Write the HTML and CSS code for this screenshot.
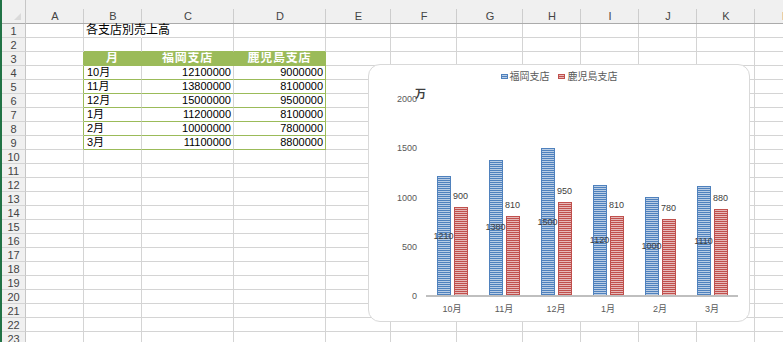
FILE: index.html
```html
<!DOCTYPE html>
<html lang="ja">
<head>
    <meta charset="UTF-8">
    <title>各支店別売上高</title>
    <link rel="stylesheet" href="styles.css">
</head>
<body>
    <div class="sheet">
        <!-- column headers -->
        <div class="corner"></div><div class="ch">A</div><div class="ch">B</div><div class="ch">C</div><div class="ch">D</div><div class="ch">E</div><div class="ch">F</div><div class="ch">G</div><div class="ch">H</div><div class="ch">I</div><div class="ch">J</div><div class="ch">K</div><div class="ch">L</div>

        <div class="rh">1</div><div></div><div class="title">各支店別売上高</div><div></div><div></div><div></div><div></div><div></div><div></div><div></div><div></div><div></div><div></div>
        <div class="rh">2</div><div></div><div class="top"></div><div class="top"></div><div class="top"></div><div></div><div></div><div></div><div></div><div></div><div></div><div></div><div></div>

        <!-- 売上表 -->
        <div class="rh">3</div><div class="edge"></div><div class="th">月</div><div class="th">福岡支店</div><div class="th">鹿児島支店</div><div></div><div></div><div></div><div></div><div></div><div></div><div></div><div></div>
        <div class="rh">4</div><div class="edge"></div><div class="td">10月</div><div class="td num">12100000</div><div class="td num last">9000000</div><div></div><div></div><div></div><div></div><div></div><div></div><div></div><div></div>
        <div class="rh">5</div><div class="edge"></div><div class="td">11月</div><div class="td num">13800000</div><div class="td num last">8100000</div><div></div><div></div><div></div><div></div><div></div><div></div><div></div><div></div>
        <div class="rh">6</div><div class="edge"></div><div class="td">12月</div><div class="td num">15000000</div><div class="td num last">9500000</div><div></div><div></div><div></div><div></div><div></div><div></div><div></div><div></div>
        <div class="rh">7</div><div class="edge"></div><div class="td">1月</div><div class="td num">11200000</div><div class="td num last">8100000</div><div></div><div></div><div></div><div></div><div></div><div></div><div></div><div></div>
        <div class="rh">8</div><div class="edge"></div><div class="td">2月</div><div class="td num">10000000</div><div class="td num last">7800000</div><div></div><div></div><div></div><div></div><div></div><div></div><div></div><div></div>
        <div class="rh">9</div><div class="edge"></div><div class="td">3月</div><div class="td num">11100000</div><div class="td num last">8800000</div><div></div><div></div><div></div><div></div><div></div><div></div><div></div><div></div>

        <div class="rh">10</div><div></div><div></div><div></div><div></div><div></div><div></div><div></div><div></div><div></div><div></div><div></div><div></div>
        <div class="rh">11</div><div></div><div></div><div></div><div></div><div></div><div></div><div></div><div></div><div></div><div></div><div></div><div></div>
        <div class="rh">12</div><div></div><div></div><div></div><div></div><div></div><div></div><div></div><div></div><div></div><div></div><div></div><div></div>
        <div class="rh">13</div><div></div><div></div><div></div><div></div><div></div><div></div><div></div><div></div><div></div><div></div><div></div><div></div>
        <div class="rh">14</div><div></div><div></div><div></div><div></div><div></div><div></div><div></div><div></div><div></div><div></div><div></div><div></div>
        <div class="rh">15</div><div></div><div></div><div></div><div></div><div></div><div></div><div></div><div></div><div></div><div></div><div></div><div></div>
        <div class="rh">16</div><div></div><div></div><div></div><div></div><div></div><div></div><div></div><div></div><div></div><div></div><div></div><div></div>
        <div class="rh">17</div><div></div><div></div><div></div><div></div><div></div><div></div><div></div><div></div><div></div><div></div><div></div><div></div>
        <div class="rh">18</div><div></div><div></div><div></div><div></div><div></div><div></div><div></div><div></div><div></div><div></div><div></div><div></div>
        <div class="rh">19</div><div></div><div></div><div></div><div></div><div></div><div></div><div></div><div></div><div></div><div></div><div></div><div></div>
        <div class="rh">20</div><div></div><div></div><div></div><div></div><div></div><div></div><div></div><div></div><div></div><div></div><div></div><div></div>
        <div class="rh">21</div><div></div><div></div><div></div><div></div><div></div><div></div><div></div><div></div><div></div><div></div><div></div><div></div>
        <div class="rh">22</div><div></div><div></div><div></div><div></div><div></div><div></div><div></div><div></div><div></div><div></div><div></div><div></div>
        <div class="rh">23</div><div></div><div></div><div></div><div></div><div></div><div></div><div></div><div></div><div></div><div></div><div></div><div></div>
    </div>

    <!-- グラフ (シートの上に浮いている) -->
    <div class="chart">
        <div class="legend">
            <span class="key blue"></span>福岡支店
            <span class="key red"></span>鹿児島支店
        </div>
        <div class="unit">万</div>
        <div class="chart-body">
            <div class="yaxis">
                <span>2000</span><span>1500</span><span>1000</span><span>500</span><span>0</span>
            </div>
            <div class="plot">
                <div class="bars">
                    <div class="group">
                        <div class="bar blue" style="height:118.6px"><span>1210</span></div>
                        <div class="col"><span class="val">900</span><div class="bar red" style="height:88.2px"></div></div>
                    </div>
                    <div class="group">
                        <div class="bar blue" style="height:135.2px"><span>1380</span></div>
                        <div class="col"><span class="val">810</span><div class="bar red" style="height:79.4px"></div></div>
                    </div>
                    <div class="group">
                        <div class="bar blue" style="height:147px"><span>1500</span></div>
                        <div class="col"><span class="val">950</span><div class="bar red" style="height:93.1px"></div></div>
                    </div>
                    <div class="group">
                        <div class="bar blue" style="height:109.8px"><span>1120</span></div>
                        <div class="col"><span class="val">810</span><div class="bar red" style="height:79.4px"></div></div>
                    </div>
                    <div class="group">
                        <div class="bar blue" style="height:98px"><span>1000</span></div>
                        <div class="col"><span class="val">780</span><div class="bar red" style="height:76.4px"></div></div>
                    </div>
                    <div class="group">
                        <div class="bar blue" style="height:108.8px"><span>1110</span></div>
                        <div class="col"><span class="val">880</span><div class="bar red" style="height:86.2px"></div></div>
                    </div>
                </div>
                <div class="xlabels">
                    <span>10月</span><span>11月</span><span>12月</span><span>1月</span><span>2月</span><span>3月</span>
                </div>
            </div>
        </div>
    </div>
</body>
</html>
```

FILE: styles.css
```css
body {
    margin: 0;
    height: 342px;
    overflow: hidden;
    position: relative;
    background: #fff;
    font-family: "Liberation Sans", "Noto Sans CJK JP", sans-serif;
    color: #000;
}

/* ---- sheet ---- */
.sheet {
    display: grid;
    grid-template-columns: 24px 58px 58px 92px 92px 65px 66px 66px 58px 58px 58px 58px 60px;
    grid-template-rows: 24px;
    grid-auto-rows: 14px;
    border-left: 2px solid #217346;
}

.sheet > div {
    box-sizing: border-box;
    border-right: 1px solid #d4d4d4;
    border-bottom: 1px solid #d4d4d4;
    padding: 0 2px 0 3px;
    font-size: 11px;
    line-height: 13px;
    white-space: nowrap;
    overflow: hidden;
}

.sheet > .corner {
    position: relative;
    background: #f0f0f0;
    border-right: 1px solid #c6c6c6;
    border-bottom: 1px solid #ababab;
}

.corner::after {
    content: "";
    position: absolute;
    right: 4px;
    bottom: 3px;
    border-left: 7px solid transparent;
    border-bottom: 7px solid #dadada;
}

.sheet > .ch {
    background: #f0f0f0 linear-gradient(#cdcdcd, #cdcdcd) no-repeat right bottom / 1px 14px;
    border-right: 0;
    border-bottom: 1px solid #ababab;
    padding: 9px 0 0;
    text-align: center;
    color: #444;
    line-height: 14px;
}

.sheet > .rh {
    grid-column: 1;
    background: #f0f0f0;
    border-right-color: #c6c6c6;
    padding: 0;
    text-align: center;
    color: #444;
    line-height: 14px;
}

.sheet > .title {
    font-size: 12px;
    overflow: visible;
    border-right-color: transparent;
    padding-left: 2px;
}

/* ---- 売上表 ---- */
.sheet > .top {
    border-bottom-color: #9bbb59;
}

.sheet > .edge {
    border-right-color: #9bbb59;
}

.sheet > .th {
    background: #9bbb59;
    border-color: #9bbb59;
    color: #fff;
    font-weight: bold;
    font-size: 12px;
    letter-spacing: 0.75px;
    text-align: center;
    padding: 0;
}

.sheet > .td {
    border-bottom-color: #9bbb59;
}

.sheet > .num {
    text-align: right;
}

.sheet > .last {
    border-right-color: #9bbb59;
}

/* ---- chart ---- */
.chart {
    position: absolute;
    left: 368px;
    top: 64px;
    width: 382px;
    height: 258px;
    box-sizing: border-box;
    border: 1px solid #d9d9d9;
    border-radius: 12px;
    background: #fff;
    padding-top: 5px;
    color: #595959;
}

.legend {
    height: 14px;
    line-height: 14px;
    font-size: 10px;
    text-align: center;
    white-space: nowrap;
}

.key {
    display: inline-block;
    width: 5px;
    height: 5px;
    margin-right: 2px;
    vertical-align: 1px;
}

.key.red {
    margin-left: 6px;
}

.unit {
    position: absolute;
    left: 46px;
    top: 20px;
    font-size: 11px;
    font-weight: bold;
    color: #404040;
}

.chart-body {
    display: flex;
    align-items: flex-start;
    margin-top: 10px;
    padding-right: 11px;
}

.yaxis {
    width: 48px;
    height: 207px;
    display: flex;
    flex-direction: column;
    justify-content: space-between;
    align-items: flex-end;
    font-size: 9px;
    line-height: 10px;
}

.plot {
    flex: 1;
    margin: 5px 0 0 9px;
}

.bars {
    height: 196px;
    display: flex;
    border-bottom: 2px solid #bfbfbf;
}

.group {
    flex: 1;
    display: flex;
    justify-content: center;
    align-items: flex-end;
    gap: 3px;
}

.col {
    width: 14px;
    display: flex;
    flex-direction: column;
    align-items: center;
}

.val {
    font-size: 9px;
    line-height: 10px;
    margin-bottom: 6px;
    color: #404040;
    white-space: nowrap;
}

.bar {
    position: relative;
    width: 14px;
    box-sizing: border-box;
}

.bar > span {
    position: absolute;
    left: 50%;
    top: 50%;
    transform: translate(-50%, -50%);
    font-size: 9px;
    line-height: 10px;
    color: #404040;
    white-space: nowrap;
}

.blue {
    background: repeating-linear-gradient(#4f81bd 0 1px, #b9cde5 1px 2px);
    border-left: 1px solid #4f81bd;
    border-right: 1px solid #4f81bd;
}

.red {
    background: repeating-linear-gradient(#c0504d 0 1px, #e6b9b8 1px 2px);
    border-left: 1px solid #c0504d;
    border-right: 1px solid #c0504d;
}

.xlabels {
    display: flex;
    margin-top: 7px;
    font-size: 9px;
    line-height: 10px;
}

.xlabels span {
    flex: 1;
    text-align: center;
}
```
